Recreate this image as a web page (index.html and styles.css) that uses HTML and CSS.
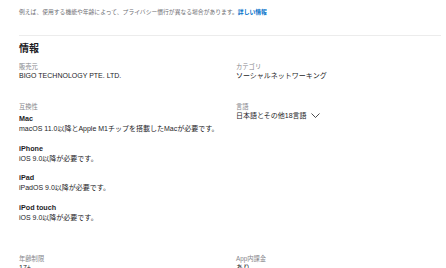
FILE: index.html
```html
<!DOCTYPE html>
<html lang="ja">
<head>
    <meta charset="UTF-8">
    <meta name="viewport" content="width=device-width, initial-scale=1.0">
    <title>情報</title>
    <link rel="stylesheet" href="styles.css">
</head>
<body>
    <p class="privacy-note">例えば、使用する機能や年齢によって、プライバシー慣行が異なる場合があります。<a href="#">詳しい情報</a></p>

    <section class="info">
        <h2>情報</h2>
        <dl class="info-grid">
            <div class="info-item">
                <dt>販売元</dt>
                <dd>BIGO TECHNOLOGY PTE. LTD.</dd>
            </div>
            <div class="info-item">
                <dt>カテゴリ</dt>
                <dd>ソーシャルネットワーキング</dd>
            </div>
            <div class="info-item">
                <dt>互換性</dt>
                <dd>
                    <div class="device">
                        <div class="device-name">Mac</div>
                        <div>macOS 11.0以降とApple M1チップを搭載したMacが必要です。</div>
                    </div>
                    <div class="device">
                        <div class="device-name">iPhone</div>
                        <div>iOS 9.0以降が必要です。</div>
                    </div>
                    <div class="device">
                        <div class="device-name">iPad</div>
                        <div>iPadOS 9.0以降が必要です。</div>
                    </div>
                    <div class="device">
                        <div class="device-name">iPod touch</div>
                        <div>iOS 9.0以降が必要です。</div>
                    </div>
                </dd>
            </div>
            <div class="info-item">
                <dt>言語</dt>
                <dd class="language">日本語とその他18言語
                    <svg class="chevron" width="9" height="5" viewBox="0 0 9 5"><path d="M0.5 0.5 L4.5 4.5 L8.5 0.5" fill="none" stroke="#1d1d1f" stroke-width="0.8"/></svg>
                </dd>
            </div>
            <div class="info-item">
                <dt>年齢制限</dt>
                <dd>17+</dd>
            </div>
            <div class="info-item">
                <dt>App内課金</dt>
                <dd>あり</dd>
            </div>
        </dl>
    </section>
</body>
</html>
```

FILE: styles.css
```css
body {
    margin: 0;
    padding: 0 5px 0 19px;
    font-family: "Liberation Sans", "Noto Sans CJK JP", sans-serif;
    color: #1d1d1f;
    background: #fff;
}
.privacy-note {
    margin: 8px 0 0;
    font-size: 5.8px;
    line-height: 8px;
    color: #6e6e73;
}
.privacy-note a {
    color: #0070c9;
    text-decoration: none;
    font-weight: bold;
}
.info {
    margin-top: 19px;
    border-top: 1px solid #ececec;
}
.info h2 {
    margin: 7px 0 0;
    font-size: 10px;
    line-height: 12px;
    font-weight: bold;
}
.info-grid {
    display: grid;
    grid-template-columns: 1fr 1fr;
    column-gap: 12px;
    row-gap: 22px;
    margin: 7px 0 0;
}
.info-item dt {
    font-size: 6.3px;
    line-height: 9px;
    color: #86868b;
}
.info-item dd {
    margin: 0;
    font-size: 7px;
    line-height: 9px;
}
.device {
    margin-top: 3px;
    margin-bottom: 9.5px;
    line-height: 10px;
}
.device + .device {
    margin-top: 0;
}
.device-name {
    font-weight: bold;
    font-size: 7.2px;
}
.language {
    display: flex;
    align-items: center;
    gap: 4px;
}
```
